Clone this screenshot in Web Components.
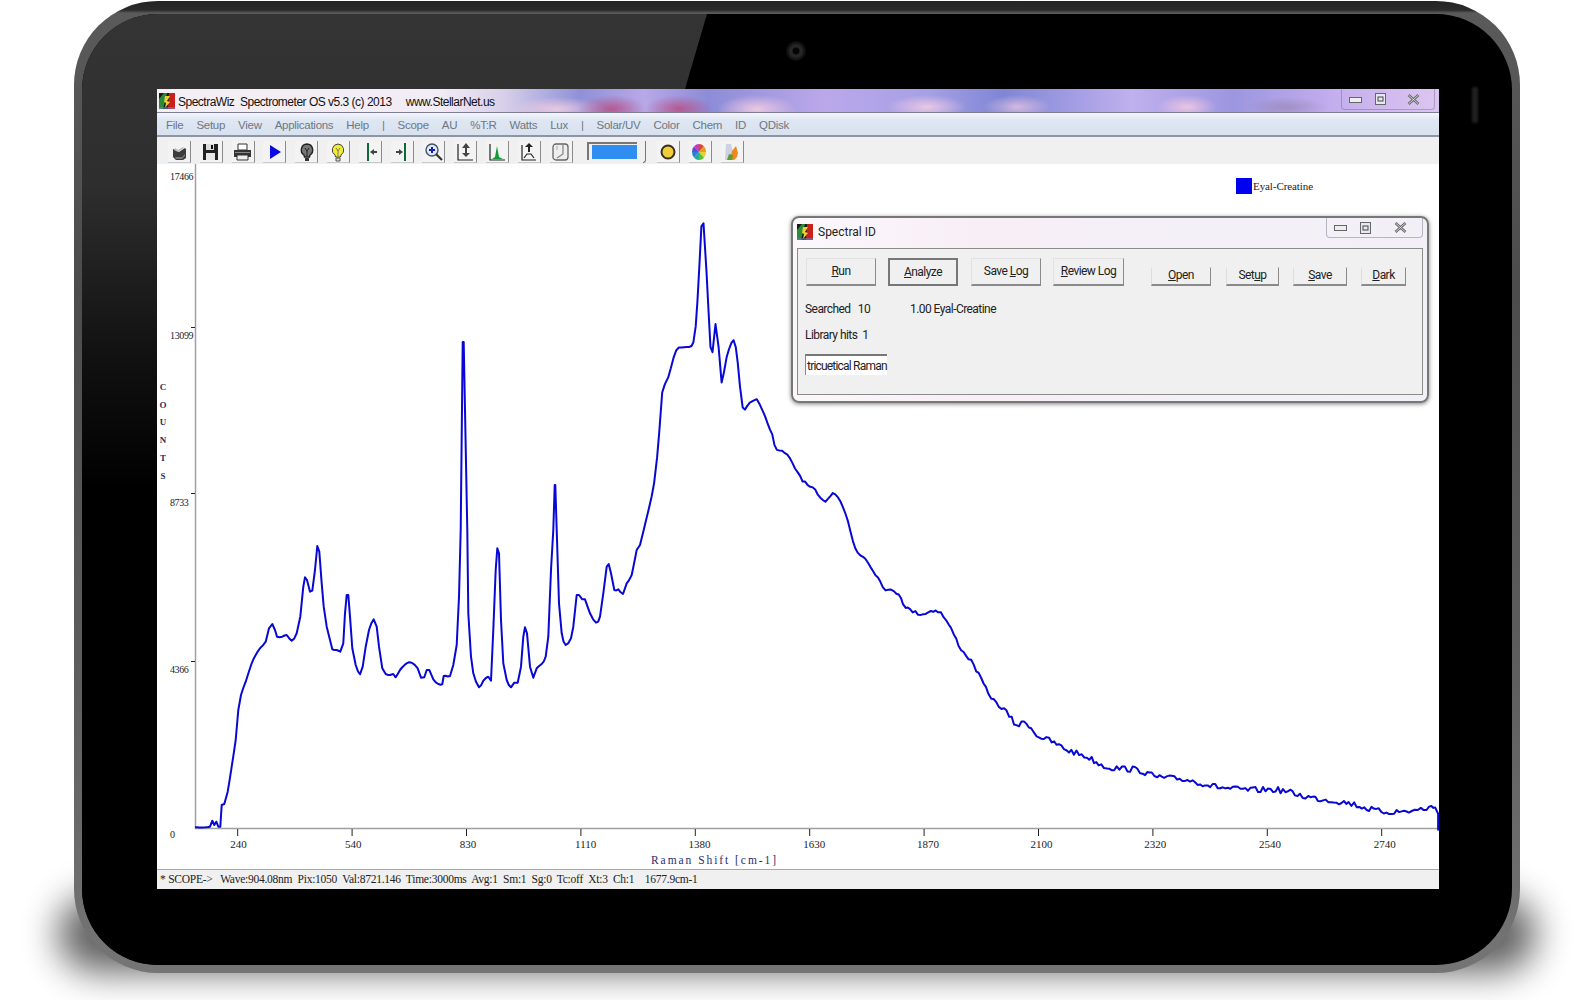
<!DOCTYPE html>
<html lang="en">
<head>
<meta charset="utf-8">
<title>SpectraWiz</title>
<style>
  html, body { margin: 0; height: 1000px; background: #fff; overflow: hidden; }
</style>
</head>
<body>
<tablet-frame>
  <app-window></app-window>
</tablet-frame>

<script>
const SANS = '"Liberation Sans", Arial, sans-serif';
const NARROW = 'Roboto, "Liberation Sans", Arial, sans-serif';
const SERIF = '"Liberation Serif", "Times New Roman", serif';

const LOGO = `<svg width="16" height="16" viewBox="0 0 16 16">
  <rect width="16" height="16" fill="#1a1a1a"/>
  <path d="M0 16V6L5 0h3L4 16z" fill="#2d8a3a"/>
  <path d="M10 0h6v16H9z" fill="#c8201c"/>
  <path d="M6 3h5L8 8l3 1-5 6 1-5-2-1z" fill="#e8d030"/>
  <rect y="14" width="16" height="2" fill="#6a7fb0" opacity=".6"/>
</svg>`;

const wedge = (a, b, c) => {
  const p = t => `${(9 + 7 * Math.cos(t * Math.PI / 180)).toFixed(2)} ${(10 + 8 * Math.sin(t * Math.PI / 180)).toFixed(2)}`;
  return `<path d="M9 10L${p(a)}A7 8 0 0 1 ${p(b)}z" fill="${c}"/>`;
};

const ICONS = {
  open: `<path d="M3 7l3 1 3 2 6-4 1 1v9l-3 2H6l-3-3z" fill="#3c3c3c"/><path d="M5 6l3 2 5-3 1 1-6 4-4-2z" fill="#bbb"/><path d="M5 15h7l3-3v2l-3 3H6z" fill="#777"/>`,
  save: `<path d="M2 2h15v16H2z" fill="#222"/><path d="M5 2h8v6H5z" fill="#ddd"/><path d="M10 3h2v4h-2z" fill="#111"/><path d="M5 11h9v7H5z" fill="#e8e8e8"/>`,
  print: `<path d="M5 2h9v6H5z" fill="#fff" stroke="#333"/><path d="M1 8h17v7H1z" fill="#333"/><path d="M4 13h11v5H4z" fill="#eee" stroke="#333"/><path d="M2 10h15v1H2z" fill="#888"/>`,
  play: `<path d="M5 3l11 7-11 7z" fill="#0a0ae0"/>`,
  bulbdark: `<path d="M10 2a6 6 0 0 1 3 11l-.5 2h-5l-.5-2A6 6 0 0 1 10 2z" fill="#777" stroke="#222" stroke-width="1.400"/><path d="M8 16h4v3H8z" fill="#333"/><path d="M8 6l2 3 2-3M10 9v5" fill="none" stroke="#222"/>`,
  bulb: `<path d="M10 2a6 6 0 0 1 3 11l-.5 2h-5l-.5-2A6 6 0 0 1 10 2z" fill="#f4ee30" stroke="#444"/><path d="M8 16h4v3H8z" fill="#ddd" stroke="#555"/><path d="M8 6l2 3 2-3M10 9v5" fill="none" stroke="#776"/>`,
  left: `<path d="M7 1h2v18H7z" fill="#0b6a35"/><path d="M10 10l4-3v2h3v2h-3v2z" fill="#444"/>`,
  right: `<path d="M12 1h2v18h-2z" fill="#0b6a35"/><path d="M11 10l-4-3v2H4v2h3v2z" fill="#444"/>`,
  zoom: `<circle cx="8" cy="8" r="6" fill="#dfe8f5" stroke="#456" stroke-width="1.400"/><path d="M5 8h6M8 5v6" stroke="#1420c0" stroke-width="2"/><path d="M12 12l6 6" stroke="#333" stroke-width="2.200"/>`,
  updown: `<path d="M2 2v16h15" fill="none" stroke="#222" stroke-width="1.200"/><path d="M10 1l4 5h-3v3h-2V6H6zM10 15l4-4h-3V9h-2v2H6z" fill="#444"/>`,
  peak: `<path d="M3 2v16h15" fill="none" stroke="#222" stroke-width="1.200"/><path d="M5 17l3-2 2-11 2 11 4 2z" fill="#139a3a"/>`,
  base: `<path d="M3 3v15h14" fill="none" stroke="#222" stroke-width="1.200"/><path d="M10 1l4 4h-3v5H9V5H6z" fill="#222"/><path d="M5 16l3-4h4l3 4" fill="none" stroke="#222" stroke-width="1.200"/>`,
  clock: `<rect x="2" y="2" width="15" height="16" rx="3" fill="#eee" stroke="#666" stroke-width="1.300"/><path d="M12 3v9l-6 4" fill="none" stroke="#888" stroke-width="1.300"/><path d="M6 4v4" stroke="#aaa"/>`,
  lamp: `<circle cx="10" cy="10" r="6.500" fill="#efce3a" stroke="#3a3020" stroke-width="2"/>`,
  wheel: wedge(-90, -45, '#e2452c') + wedge(-45, 0, '#ee9a20') + wedge(0, 45, '#e4d430') + wedge(45, 90, '#58c030') + wedge(90, 135, '#20b090') + wedge(135, 180, '#2a80d8') + wedge(180, 225, '#5a50d8') + wedge(225, 270, '#c040b0'),
  flask: `<path d="M4 2h5l2 8-3 8H3z" fill="#ccd2e2"/><path d="M8 18l2-9 4-5 2 7-1 4-3 3z" fill="#ee8a20"/><path d="M5 18l2-6 4 1-1 5z" fill="#5aa030"/>`
};

class TabletFrame extends HTMLElement {
  constructor() {
    super();
    this.attachShadow({ mode: "open" });
    this.shadowRoot.innerHTML = `
      <style>
        :host {
          display: block;
          position: relative;
          width: 1446px;
          height: 972px;
          margin: 1px 0 0 74px;
        }
        .shadow {
          position: absolute;
          left: -16px;
          right: -16px;
          bottom: 1px;
          height: 76px;
          border-radius: 60px;
          background: #000;
          opacity: .62;
          filter: blur(18px);
        }
        .rim {
          position: relative;
          box-sizing: border-box;
          height: 100%;
          padding: 13px 8px 8px;
          border-radius: 84px;
          background: linear-gradient(#242424 0, #2a2a2a 9px, #5a5a5a 12px, #4c4c4c 30%, #5e5e5e 70%, #757575 100%);
        }
        .bezel {
          position: relative;
          box-sizing: border-box;
          height: 100%;
          padding: 75px 73px 76px 75px;
          border-radius: 76px;
          background: #000;
          overflow: hidden;
        }
        .gloss {
          position: absolute;
          inset: 0;
          background: linear-gradient(#343434 0, #2e2e2e 18%, #111 36%, #000 50%);
          clip-path: polygon(0 0, 625px 0, 603px 75px, 0 2200px);
        }
        .camera {
          position: absolute;
          left: 704px;
          top: 27px;
          width: 20px;
          height: 20px;
          border-radius: 50%;
          background: radial-gradient(circle, #050505 0 3px, #262626 4px 6px, #151515 8px, #0b0b0b 10px);
        }
        .slot-mark {
          position: absolute;
          right: 34px;
          top: 73px;
          width: 6px;
          height: 36px;
          border-radius: 2px;
          background: #202020;
          filter: blur(1px);
        }
        .screen { position: relative; height: 800px; }
      </style>
      <div class="shadow"></div>
      <div class="rim">
        <div class="bezel">
          <div class="gloss"></div>
          <div class="camera"></div>
          <div class="slot-mark"></div>
          <div class="screen"><slot></slot></div>
        </div>
      </div>`;
  }
}

class AppWindow extends HTMLElement {
  constructor() {
    super();
    this.attachShadow({ mode: "open" });
    this.shadowRoot.innerHTML = `
      <style>
        :host {
          display: flex;
          flex-direction: column;
          height: 800px;
          background: #fff;
          font-family: ${SANS};
          font-size: 12px;
          color: #111;
        }
      </style>
      <title-bar></title-bar>
      <menu-bar></menu-bar>
      <tool-bar></tool-bar>
      <spectrum-chart><spectral-dialog></spectral-dialog></spectrum-chart>
      <status-bar>* SCOPE-&gt;   Wave:904.08nm  Pix:1050  Val:8721.146  Time:3000ms  Avg:1  Sm:1  Sg:0  Tc:off  Xt:3  Ch:1    1677.9cm-1</status-bar>`;
  }
}

class CaptionButtons extends HTMLElement {
  constructor() {
    super();
    this.attachShadow({ mode: "open" });
    this.shadowRoot.innerHTML = `
      <style>
        :host {
          display: grid;
          grid-template-columns: 26px 25px 1fr;
          box-sizing: border-box;
          align-items: center;
          justify-items: center;
          border: 1px solid rgba(110,110,130,.45);
          border-top: 0;
          border-radius: 0 0 4px 4px;
        }
        span { display: flex; }
      </style>
      <span><svg width="13" height="7"><rect x=".5" y="1.500" width="12" height="5" fill="#eee" stroke="#666"/></svg></span>
      <span><svg width="11" height="12"><rect x=".5" y=".5" width="10" height="11" fill="#e8e8f2" stroke="#666"/><rect x="3" y="4" width="5" height="4" fill="none" stroke="#444"/></svg></span>
      <span><svg width="13" height="11"><path d="M1.500 1l10 9M11.500 1l-10 9" stroke="#666" stroke-width="2.600"/><path d="M1.500 1l10 9M11.500 1l-10 9" stroke="#eee" stroke-width=".8"/></svg></span>`;
  }
}

class TitleBar extends HTMLElement {
  constructor() {
    super();
    this.attachShadow({ mode: "open" });
    this.shadowRoot.innerHTML = `
      <style>
        :host {
          display: flex;
          align-items: center;
          flex: none;
          height: 24px;
          box-sizing: border-box;
          padding: 0 4px 0 3px;
          border-bottom: 1px solid #7f7d98;
          background:
            radial-gradient(34px 14px at 455px 20px, rgba(190,60,110,.7), transparent),
            radial-gradient(34px 14px at 522px 20px, rgba(190,60,110,.7), transparent),
            radial-gradient(40px 14px at 600px 20px, rgba(245,205,225,.9), transparent),
            radial-gradient(50px 12px at 400px 20px, rgba(240,205,225,.9), transparent),
            radial-gradient(40px 12px at 770px 18px, rgba(250,210,225,.8), transparent),
            radial-gradient(30px 12px at 1030px 18px, rgba(250,205,225,.8), transparent),
            radial-gradient(34px 12px at 860px 18px, rgba(245,205,225,.7), transparent),
            radial-gradient(40px 10px at 1130px 18px, rgba(150,130,170,.6), transparent),
            linear-gradient(90deg, #f4eef5 0, #f2ecf4 22%, #d8d0ea 27%, #8f90d8 33%, #b8a8e8 38%, #8c8cd8 43%, #bba8ea 52%, #a7a0e6 60%, #7f86d6 66%, #c0b0ee 76%, #9c96e0 84%, #c4aeee 92%, #dcc6f0 100%);
        }
        .logo { display: flex; margin: 0 3px 0 -1px; }
        .text { white-space: pre; letter-spacing: -.5px; padding-top: 2px; }
        caption-buttons { margin-left: auto; width: 94px; height: 21px; align-self: flex-start; }
      </style>
      <span class="logo">${LOGO}</span>
      <span class="text">SpectraWiz  Spectrometer OS v5.3 (c) 2013     www.StellarNet.us</span>
      <caption-buttons></caption-buttons>`;
  }
}

class MenuBar extends HTMLElement {
  constructor() {
    super();
    this.attachShadow({ mode: "open" });
    const items = ["File", "Setup", "View", "Applications", "Help", "|", "Scope", "AU", "%T:R", "Watts", "Lux", "|", "Solar/UV", "Color", "Chem", "ID", "QDisk"];
    this.shadowRoot.innerHTML = `
      <style>
        :host {
          display: flex;
          align-items: center;
          flex: none;
          gap: 13px;
          height: 24px;
          box-sizing: border-box;
          padding: 1px 0 0 9px;
          border-bottom: 2px solid #8d94a3;
          background: linear-gradient(#f4f7fc 0, #dfe7f3 30%, #d8e1ee 100%);
          color: #6d7784;
          font-size: 11.500px;
          letter-spacing: -.28px;
        }
      </style>
      ${items.map(t => `<span>${t}</span>`).join("")}`;
  }
}

class ToolBtn extends HTMLElement {
  constructor() {
    super();
    this.attachShadow({ mode: "open" });
    this.shadowRoot.innerHTML = `
      <style>
        :host {
          display: flex;
          align-items: center;
          justify-content: center;
          box-sizing: border-box;
          width: 23px;
          height: 22px;
          border-right: 1px solid #8b8b8b;
          border-bottom: 1px solid #c9c9c9;
          background: #f3f3f3;
        }
      </style>
      <svg width="19" height="20" viewBox="0 0 19 20">${ICONS[this.getAttribute("icon")] || ""}</svg>`;
  }
}

class ToolBar extends HTMLElement {
  constructor() {
    super();
    this.attachShadow({ mode: "open" });
    const first = ["open", "save", "print", "play", "bulbdark", "bulb", "left", "right", "zoom", "updown", "peak", "base", "clock"];
    const last = ["lamp", "wheel", "flask"];
    const btns = list => list.map(n => `<tool-btn icon="${n}"></tool-btn>`).join("");
    this.shadowRoot.innerHTML = `
      <style>
        :host {
          display: flex;
          align-items: flex-start;
          flex: none;
          gap: 8.800px;
          height: 27px;
          box-sizing: border-box;
          padding: 4px 0 0 11px;
          background: #f0f0f0;
        }
        .meter {
          box-sizing: border-box;
          width: 50px;
          height: 18px;
          margin: 1px 0 0 6px;
          border-top: 2px solid #777;
          border-left: 2px solid #777;
          padding: 1px 0 1px 3px;
          background-clip: content-box;
          background-color: #2f8cf0;
        }
        .notch {
          width: 2px;
          height: 21px;
          margin: 0 2px 0 -3px;
          border-right: 1px solid #777;
          border-bottom: 1px solid #777;
          border-radius: 0 0 3px 0;
        }
      </style>
      ${btns(first)}
      <div class="meter"></div>
      <div class="notch"></div>
      ${btns(last)}`;
  }
}

class SpectrumChart extends HTMLElement {
  constructor() {
    super();
    this.attachShadow({ mode: "open" });
    this.curve = this.buildCurve();
    const k = 1578 / 1568;
    const xLabels = [[240,237],[540,351],[830,465],[1110,582],[1380,695],[1630,809],[1870,922],[2100,1035],[2320,1148],[2540,1262],[2740,1376]];
    const yLabels = [["17466",177],["13099",336],["8733",503],["4366",670]];
    const yTicks = [327, 493, 661];
    this.shadowRoot.innerHTML = `
      <style>
        :host {
          display: block;
          position: relative;
          flex: 1;
          min-height: 0;
          background: #fff;
        }
        svg { display: block; }
        text { font-family: ${SERIF}; fill: #222; }
        .legend {
          position: absolute;
          left: 1079px;
          top: 14px;
          display: flex;
          align-items: center;
          gap: 1px;
          font: 11px ${SERIF};
          letter-spacing: -.08px;
          color: #222;
        }
        .swatch { width: 16px; height: 16px; background: #0000f0; }
      </style>
      <svg width="1282" height="705" viewBox="157 164 1282 705">
        <path d="M195.500 164V828.500H1439" fill="none" stroke="#a0a0a0" stroke-width="1.500"/>
        ${yTicks.map(y => `<path d="M191 ${y}.5h4" stroke="#222"/>`).join("")}
        ${xLabels.map((l, i) => `<path d="M${(237.7 + i * 114.4).toFixed(1)} 829v7" stroke="#222"/>`).join("")}
        ${yLabels.map(([t, y]) => `<text x="170" y="${y + 3}" font-size="10" textLength="${t.length * 4.700}">${t}</text>`).join("")}
        <text x="170" y="838" font-size="10">0</text>
        ${xLabels.map(([t, x]) => `<text x="${(x * k).toFixed(1)}" y="848" text-anchor="middle" font-size="11">${t}</text>`).join("")}
        <text x="651" y="864" font-size="11.500" letter-spacing="1.950" style="fill:#2c2c70">Raman Shift [cm-1]</text>
        ${[..."COUNTS"].map((c, i) => `<text x="163" y="${390 + i * 17.700}" text-anchor="middle" font-size="9" font-weight="bold" style="fill:#2c2c55">${c}</text>`).join("")}
        <path d="${this.curve}" fill="none" stroke="#0808d4" stroke-width="2" stroke-linejoin="round"/>
      </svg>
      <div class="legend"><span class="swatch"></span><span>Eyal-Creatine</span></div>
      <slot></slot>`;
  }

  buildCurve() {
    const k = 1578 / 1568;
    // low part traced from a 3x crop at (195,530), the rest from the whole picture
    const low = [[0,892],[45,890],[52,872],[58,885],[64,875],[70,890],[76,890],[80,825],[88,822],[98,785],[110,710],[122,630],[130,540],[138,495],[152,455],[170,400],[182,375],[195,355],[212,335],[222,295],[232,282],[240,300],[246,320],[262,320],[275,315],[290,332],[305,310],[316,260],[325,170],[330,142],[336,150],[345,185],[352,182],[360,120],[367,48],[373,65],[380,160],[386,230],[395,290],[405,330],[412,358],[425,360],[436,365],[445,340],[450,250],[455,195],[460,195],[465,260],[472,355],[482,405],[495,433],[503,410],[512,350],[522,300],[536,268],[545,290],[552,350],[562,415],[572,432],[585,435],[595,432],[602,442],[615,420],[635,400],[650,398],[668,415],[678,443],[688,442],[695,420],[703,420],[715,448],[730,462],[742,462],[746,438],[765,438],[775,405],[785,345],[792,200],[797,0],[803,-564],[806,-564],[817,0],[820,250],[828,380],[835,430],[852,472],[865,452],[880,440],[888,452],[895,300],[902,120],[907,55],[912,70],[918,270],[925,400],[935,450],[948,472],[958,458],[968,458],[978,410],[985,320],[990,292],[996,310],[1005,410],[1015,443],[1025,415],[1040,402],[1052,380],[1060,320],[1068,120],[1075,0],[1079,-135],[1081,-135],[1085,0],[1092,220],[1100,310],[1112,345],[1128,325],[1135,290],[1145,195],[1152,195],[1162,208],[1170,208],[1185,250],[1203,278],[1215,260],[1225,190],[1235,110],[1241,102],[1248,130],[1258,180],[1270,178],[1284,192],[1295,160],[1310,135],[1325,60],[1335,45],[1345,5]]
      .map(([x, y]) => [195 + x / 3, 530 + y / 3]);
    const high = [[650,480],[655,430],[658,390],[664,375],[672,348],[680,345],[689,340],[693,300],[697,225],[699,222],[702,270],[706,345],[708,350],[711,322],[714,345],[717,380],[722,355],[729,338],[733,360],[738,405],[745,400],[752,397],[758,410],[765,425],[772,447],[780,450],[790,465],[800,480],[810,488],[818,498],[830,490],[840,510],[850,545],[860,555],[870,570],[880,585],[893,590],[900,603],[915,610],[932,607],[945,625],[955,645],[965,657],[975,675],[985,693],[1000,708],[1010,720],[1020,718],[1030,730],[1045,737],[1060,745],[1080,752],[1100,762],[1130,765],[1150,772],[1180,775],[1210,782],[1240,785],[1270,785],[1300,792],[1340,798],[1370,806],[1400,806],[1426,802],[1429,806],[1429,824]]
      .map(([x, y]) => [x * k, y * k]);
    const trace = low.concat(high);

    let seed = 7;
    const rnd = () => {
      seed = (seed * 16807) % 2147483647;
      return seed / 2147483647 - 0.5;
    };
    const pts = [];
    trace.forEach((p, i) => {
      const p0 = trace[i - 1] || p, p1 = trace[i + 1] || p, p2 = trace[i + 2] || p1;
      const n = Math.max(1, Math.round(Math.abs(p1[0] - p[0]) / 2.500));
      for (let s = 0; s < n; s++) {
        const t = s / n;
        const cr = j => 0.5 * (2 * p[j] + (p1[j] - p0[j]) * t + (2 * p0[j] - 5 * p[j] + 4 * p1[j] - p2[j]) * t * t + (3 * p[j] - p0[j] - 3 * p1[j] + p2[j]) * t * t * t);
        const x = cr(0);
        // the slow tail of the spectrum has a small ripple, the peaks stay clean
        const amp = x > 1000 ? 6 : x > 750 ? 3.500 : 0;
        pts.push([x, cr(1) + rnd() * amp]);
      }
    });
    pts.push(trace[trace.length - 1]);
    return "M" + pts.map(([x, y]) => `${x.toFixed(1)} ${y.toFixed(1)}`).join("L");
  }
}

class DlgButton extends HTMLElement {
  constructor() {
    super();
    this.attachShadow({ mode: "open" });
    this.shadowRoot.innerHTML = `
      <style>
        :host {
          display: flex;
          align-items: center;
          justify-content: center;
          box-sizing: border-box;
          flex: none;
          height: 28px;
          padding-bottom: 1px;
          white-space: pre;
          border-right: 1px solid #8a8a8a;
          border-bottom: 2px solid #8a8a8a;
          border-top: 1px solid #e2e2e2;
          border-left: 1px solid #e2e2e2;
          background: #f0f0f0;
        }
        :host([short]) { height: 19px; padding-bottom: 3px; border-top-color: #f0f0f0; border-left-color: #ddd; }
        :host([active]) { border: 2px solid #777; }
      </style>
      <slot></slot>`;
  }
}

class SpectralDialog extends HTMLElement {
  constructor() {
    super();
    this.attachShadow({ mode: "open" });
    this.shadowRoot.innerHTML = `
      <style>
        :host {
          display: flex;
          flex-direction: column;
          position: absolute;
          left: 634px;
          top: 52px;
          width: 638px;
          height: 187px;
          box-sizing: border-box;
          border: 2px solid #777;
          border-radius: 8px;
          background: linear-gradient(90deg, #fbf8fb, #f8eef6 30%, #f4f0f8 60%, #f2f0f6);
          box-shadow: 0 1px 4px rgba(0,0,0,.5);
          font-family: ${NARROW};
          font-size: 12px;
          color: #222;
        }
        .head {
          display: flex;
          align-items: flex-start;
          flex: none;
          height: 30px;
          padding: 0 4px 0 4px;
        }
        .logo { display: flex; margin: 6px 5px 0 0; }
        .title { margin-top: 7px; }
        caption-buttons { margin-left: auto; width: 97px; height: 20px; }
        .panel {
          flex: 1;
          margin: 0 4px 6px;
          padding: 9px 8px 0 7px;
          border: 1px solid #8b8b8b;
          background: #f0f0f0;
          letter-spacing: -.55px;
        }
        .buttons { display: flex; align-items: flex-end; margin-left: 1px; }
        .row { display: flex; margin-top: 16px; line-height: 14px; }
        .row + .row { margin-top: 12px; }
        .row .lead { width: 105px; white-space: pre; }
        .row span:last-child { white-space: pre; }
        .entry {
          box-sizing: border-box;
          width: 82px;
          height: 21px;
          margin-top: 12px;
          padding: 3px 0 0 1px;
          border-top: 2px solid #777;
          border-left: 1px solid #888;
          background: #fff;
          white-space: nowrap;
          letter-spacing: -.8px;
        }
      </style>
      <div class="head">
        <span class="logo">${LOGO}</span>
        <span class="title">Spectral ID</span>
        <caption-buttons></caption-buttons>
      </div>
      <div class="panel">
        <div class="buttons">
          <dlg-button style="width:70px"><u>R</u>un</dlg-button>
          <dlg-button active style="width:70px;margin-left:12px"><u>A</u>nalyze</dlg-button>
          <dlg-button style="width:70px;margin-left:13px">Save <u>L</u>og</dlg-button>
          <dlg-button style="width:71px;margin-left:12px"><u>R</u>eview Log</dlg-button>
          <dlg-button short style="width:60px;margin-left:27px"><u>O</u>pen</dlg-button>
          <dlg-button short style="width:53px;margin-left:15px">Set<u>u</u>p</dlg-button>
          <dlg-button short style="width:54px;margin-left:14px"><u>S</u>ave</dlg-button>
          <dlg-button short style="width:45px;margin-left:14px"><u>D</u>ark</dlg-button>
        </div>
        <div class="row"><span class="lead">Searched   10</span><span>1.00 Eyal-Creatine</span></div>
        <div class="row"><span class="lead">Library hits  1</span></div>
        <div class="entry">tricuetical Raman</div>
      </div>`;
  }
}

class StatusBar extends HTMLElement {
  constructor() {
    super();
    this.attachShadow({ mode: "open" });
    this.shadowRoot.innerHTML = `
      <style>
        :host {
          display: flex;
          align-items: center;
          flex: none;
          height: 20px;
          box-sizing: border-box;
          padding: 0 0 2px 3px;
          border-top: 1px solid #a8a8a8;
          background: #f0f0f0;
          color: #222;
          font: 11.500px ${SERIF};
          white-space: pre;
          letter-spacing: -.25px;
        }
      </style>
      <slot></slot>`;
  }
}

customElements.define("tablet-frame", TabletFrame);
customElements.define("caption-buttons", CaptionButtons);
customElements.define("title-bar", TitleBar);
customElements.define("menu-bar", MenuBar);
customElements.define("tool-btn", ToolBtn);
customElements.define("tool-bar", ToolBar);
customElements.define("spectrum-chart", SpectrumChart);
customElements.define("dlg-button", DlgButton);
customElements.define("spectral-dialog", SpectralDialog);
customElements.define("status-bar", StatusBar);
customElements.define("app-window", AppWindow);
</script>
</body>
</html>
